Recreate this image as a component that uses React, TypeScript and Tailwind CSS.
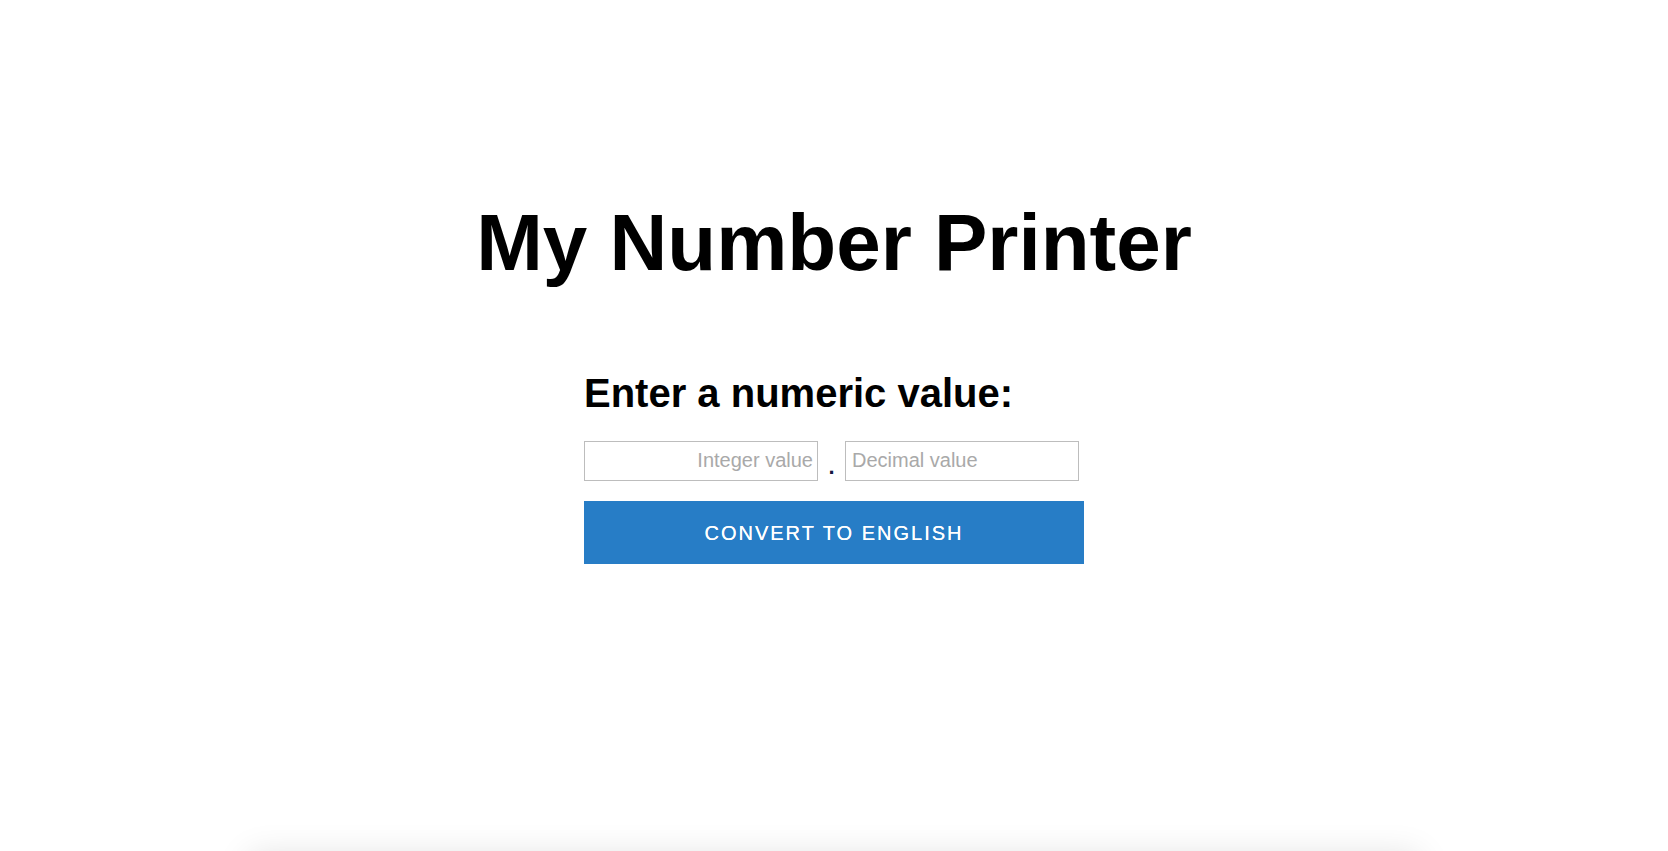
import { useState } from 'react'

export default function App() {
  const [integerPart, setIntegerPart] = useState('')
  const [decimalPart, setDecimalPart] = useState('')

  return (
    <div className="min-h-screen overflow-hidden bg-white font-['Liberation_Sans',Arial,Helvetica,sans-serif] text-black">
      <h1 className="pt-[197px] text-center text-[80px] font-bold leading-[92px]">My Number Printer</h1>

      <form className="mx-auto mt-[81px] w-[500px]" onSubmit={(e) => e.preventDefault()}>
        <h2 className="text-[40px] font-bold leading-[46px]">Enter a numeric value:</h2>

        <div className="mt-[25px] flex">
          <input
            type="text"
            value={integerPart}
            onChange={(e) => setIntegerPart(e.target.value)}
            placeholder="Integer value"
            className="h-[40px] w-[234px] border border-[#bdbdbd] bg-white pb-[2px] pr-[4px] text-right text-[20px] text-black outline-none placeholder:text-[#a9a9a9]"
          />
          <span className="flex w-[27px] items-end justify-center pb-[3px] text-[22px] font-bold leading-none text-[#14183f]">.</span>
          <input
            type="text"
            value={decimalPart}
            onChange={(e) => setDecimalPart(e.target.value)}
            placeholder="Decimal value"
            className="h-[40px] w-[234px] border border-[#bdbdbd] bg-white pb-[2px] pl-[6px] text-[20px] text-black outline-none placeholder:text-[#a9a9a9]"
          />
        </div>

        <button
          type="submit"
          className="mt-[20px] h-[63px] w-full bg-[#277dc6] text-[20px] tracking-[2px] text-white [text-shadow:0_0_0.4px_#fff]"
        >
          CONVERT TO ENGLISH
        </button>
      </form>

      <div className="mx-auto mt-[291px] h-[200px] w-[1170px] bg-white shadow-[0_0_32px_rgba(0,0,0,0.12)]" />
    </div>
  )
}
